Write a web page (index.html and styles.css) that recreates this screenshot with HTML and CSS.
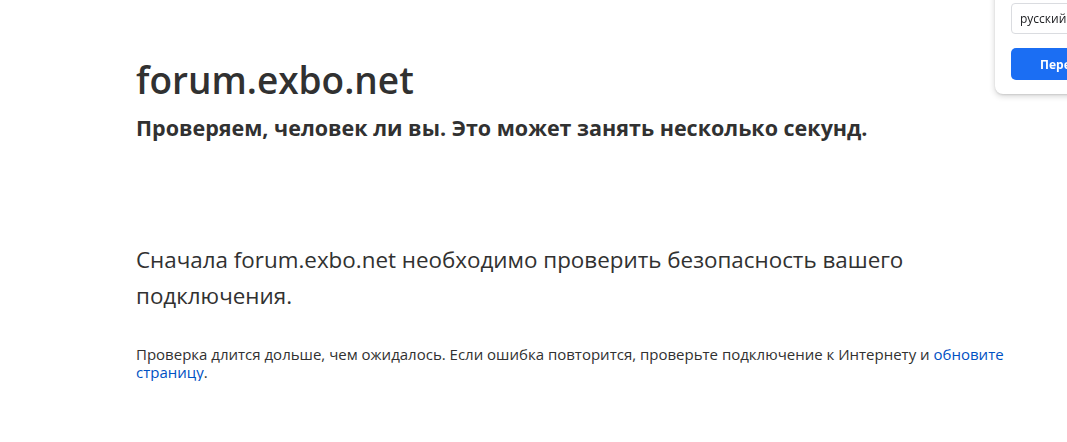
FILE: index.html
```html
<!DOCTYPE html>
<html lang="ru">
<head>
  <meta charset="UTF-8">
  <title>Just a moment...</title>
  <link rel="stylesheet" href="styles.css">
</head>
<body>
  <div class="main-wrapper">
    <div class="main-content">
      <h1 class="zone-name-title">forum.exbo.net</h1>
      <h2 class="h2">Проверяем, человек ли вы. Это может занять несколько секунд.</h2>
      <div class="spacer"></div>
      <p class="core-msg">Сначала forum.exbo.net необходимо проверить безопасность вашего подключения.</p>
      <p class="small-msg">Проверка длится дольше, чем ожидалось. Если ошибка повторится, проверьте подключение к Интернету и <a href="#">обновите страницу</a>.</p>
    </div>
  </div>

  <div class="translate-popup">
    <div class="lang-select">русский</div>
    <button class="translate-btn">Перевести</button>
  </div>
</body>
</html>
```

FILE: styles.css
```css
* {
  box-sizing: border-box;
}
body {
  margin: 0;
  font-family: "Open Sans", "Noto Sans", sans-serif;
  color: #313131;
  background-color: #fff;
}
.main-content {
  margin-left: 136px;
  max-width: 880px;
  padding-top: 52px;
}
.zone-name-title {
  margin: 0;
  font-size: 37px;
  font-weight: 600;
  line-height: 56px;
}
.h2 {
  margin: 5px 0 0 0;
  font-size: 21.5px;
  font-weight: 700;
  line-height: 30px;
}
.spacer {
  height: 99px;
}
.core-msg {
  margin: 0;
  font-size: 22.4px;
  line-height: 36px;
}
.small-msg {
  margin: 31px 0 0 0;
  font-size: 15px;
  line-height: 18px;
}
.small-msg a {
  color: #0051c3;
  text-decoration: none;
}
.translate-popup {
  position: fixed;
  top: -20px;
  left: 995px;
  width: 300px;
  height: 114px;
  padding: 23px 16px 0 16px;
  background-color: #fff;
  border-radius: 8px;
  box-shadow: 0 2px 6px rgba(0, 0, 0, 0.18), 0 1px 2px rgba(0, 0, 0, 0.1);
}
.lang-select {
  height: 31px;
  padding: 0 8px;
  border: 1px solid #dadce0;
  border-radius: 4px;
  font-size: 12px;
  line-height: 29px;
  color: #202124;
}
.translate-btn {
  margin-top: 14px;
  width: 120px;
  height: 32px;
  padding: 0 0 0 29px;
  text-align: left;
  background-color: #1b6ef3;
  color: #fff;
  border: none;
  border-radius: 5px;
  font-family: inherit;
  font-size: 12px;
  font-weight: 700;
}
```
